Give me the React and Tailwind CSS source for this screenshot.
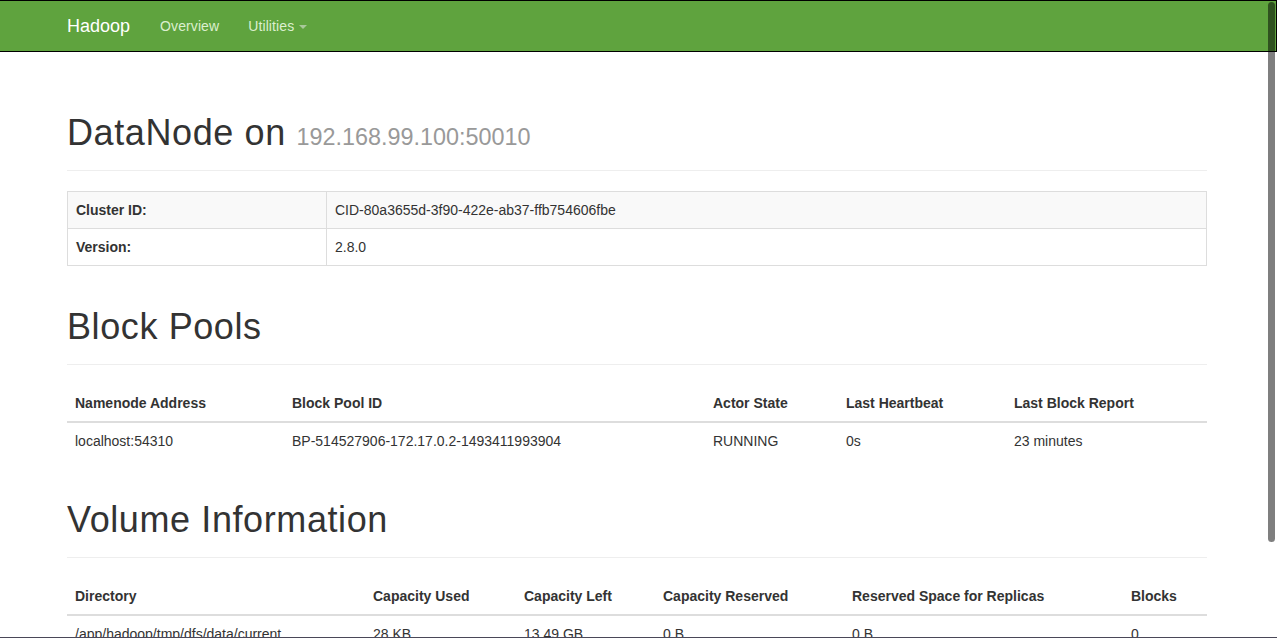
import React from "react";

function PageHeader({ children, mt }) {
  return (
    <div className={`${mt} pb-[17px] border-b border-[#eeeeee]`}>
      <h1 className="h-[40px] text-[36px] leading-[40px] font-medium text-[#333333] tracking-[0.6px] whitespace-nowrap">{children}</h1>
    </div>
  );
}

const th = "text-left font-bold px-2 py-2 leading-5 border-b-2 border-[#dddddd] align-bottom";
const td = "px-2 py-2 leading-5 border-t border-[#dddddd] align-top";

export default function App() {
  return (
    <div className="relative w-[1277px] h-[638px] overflow-hidden bg-white font-['Liberation_Sans',Arial,sans-serif] text-[14px] text-[#333333]">
      {/* navbar */}
      <div className="h-[52px] bg-[#5fa33e] border-t border-b border-black border-r">
        <div className="ml-[67px] flex items-center h-[50px]">
          <span className="text-[18px] text-white font-medium">Hadoop</span>
          <span className="ml-[30px] text-[#dcefcf] tracking-[0.1px]">Overview</span>
          <span className="ml-[29px] text-[#dcefcf] tracking-[0.1px]">Utilities</span>
          <span className="ml-[5px] mt-[2px] w-0 h-0 border-l-[4px] border-r-[4px] border-t-[4px] border-l-transparent border-r-transparent border-t-[#a9c89a]"></span>
        </div>
      </div>

      <div className="ml-[67px] w-[1140px]">
        <PageHeader mt="mt-[61px]">
          DataNode on{" "}
          <small className="text-[23.4px] leading-none font-normal text-[#999999] tracking-[0px]">192.168.99.100:50010</small>
        </PageHeader>

        <table className="mt-[20px] w-full table-fixed border-collapse border border-[#dddddd]">
          <colgroup>
            <col className="w-[259px]" />
            <col />
          </colgroup>
          <tbody>
            <tr className="bg-[#f9f9f9]">
              <th className="text-left font-bold px-2 py-2 leading-5 border border-[#dddddd]">Cluster ID:</th>
              <td className="px-2 py-2 leading-5 border border-[#dddddd]">CID-80a3655d-3f90-422e-ab37-ffb754606fbe</td>
            </tr>
            <tr>
              <th className="text-left font-bold px-2 py-2 leading-5 border border-[#dddddd]">Version:</th>
              <td className="px-2 py-2 leading-5 border border-[#dddddd]">2.8.0</td>
            </tr>
          </tbody>
        </table>

        <PageHeader mt="mt-[41px]">Block Pools</PageHeader>

        <table className="mt-[20px] w-full table-fixed border-collapse">
          <colgroup>
            <col className="w-[217px]" />
            <col className="w-[421px]" />
            <col className="w-[133px]" />
            <col className="w-[168px]" />
            <col />
          </colgroup>
          <thead>
            <tr>
              <th className={th}>Namenode Address</th>
              <th className={th}>Block Pool ID</th>
              <th className={th}>Actor State</th>
              <th className={th}>Last Heartbeat</th>
              <th className={th}>Last Block Report</th>
            </tr>
          </thead>
          <tbody>
            <tr>
              <td className={td}>localhost:54310</td>
              <td className={td}>BP-514527906-172.17.0.2-1493411993904</td>
              <td className={td}>RUNNING</td>
              <td className={td}>0s</td>
              <td className={td}>23 minutes</td>
            </tr>
          </tbody>
        </table>

        <PageHeader mt="mt-[41px]">Volume Information</PageHeader>

        <table className="mt-[20px] w-full table-fixed border-collapse">
          <colgroup>
            <col className="w-[298px]" />
            <col className="w-[151px]" />
            <col className="w-[139px]" />
            <col className="w-[189px]" />
            <col className="w-[279px]" />
            <col />
          </colgroup>
          <thead>
            <tr>
              <th className={th}>Directory</th>
              <th className={th}>Capacity Used</th>
              <th className={th}>Capacity Left</th>
              <th className={th}>Capacity Reserved</th>
              <th className={th}>Reserved Space for Replicas</th>
              <th className={th}>Blocks</th>
            </tr>
          </thead>
          <tbody>
            <tr>
              <td className={td}>/app/hadoop/tmp/dfs/data/current</td>
              <td className={td}>28 KB</td>
              <td className={td}>13.49 GB</td>
              <td className={td}>0 B</td>
              <td className={td}>0 B</td>
              <td className={td}>0</td>
            </tr>
          </tbody>
        </table>
      </div>

      {/* overlay scrollbar thumb */}
      <div className="absolute right-[2px] top-[2px] w-[7px] h-[540px] rounded-full bg-black/50"></div>
      {/* window bottom edge */}
      <div className="absolute left-0 right-0 bottom-0 h-px bg-[#4a4858]"></div>
    </div>
  );
}
